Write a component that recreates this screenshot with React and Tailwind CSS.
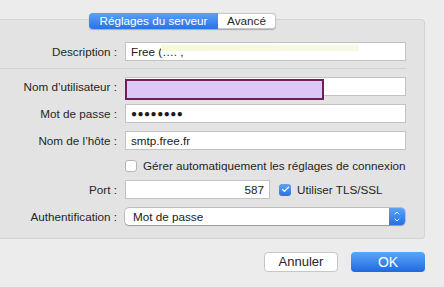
import { ChevronDown, ChevronUp, Check } from "lucide-react";

const Label = ({ children }) => (
  <div className="w-[125px] shrink-0 pr-[8px] text-right text-[11.7px] text-[#262626]">
    {children}
  </div>
);

const Field = ({ children, className = "" }) => (
  <div
    className={`h-[19px] border border-[#c3c3c3] bg-white flex items-center px-[5px] text-[11.7px] text-[#1a1a1a] ${className}`}
  >
    {children}
  </div>
);

export default function App() {
  return (
    <div
      className="w-[444px] h-[287px] bg-[#ececec] overflow-hidden"
      style={{ fontFamily: '"Liberation Sans", Arial, sans-serif' }}
    >
      <div className="pt-[19px] pr-[19px]">
        <div className="relative h-[220px] bg-[#e3e3e3] border-t border-r border-b border-[#d3d3d3] rounded-r-[4px]">
          {/* tabs */}
          <div className="absolute left-[89px] top-[-7px] flex h-[16px] text-[11.7px] shadow-[0_0.5px_1px_rgba(0,0,0,0.25)] rounded-[4px]">
            <div className="w-[129px] flex items-center justify-center rounded-l-[4px] bg-gradient-to-b from-[#57a2f7] to-[#2a72e6] text-white">
              Réglages du serveur
            </div>
            <div className="w-[58px] flex items-center justify-center rounded-r-[4px] bg-white border border-l-0 border-[#c8c8c8] text-[#262626]">
              Avancé
            </div>
          </div>

          <div className="pt-[22px] flex flex-col">
            <div className="flex items-center">
              <Label>Description :</Label>
              <Field className="w-[281px] relative">
                <span>Free (…. ,</span>
                <div className="absolute left-[35px] top-[2px] w-[198px] h-[6px] bg-gradient-to-r from-[#f7f9d6] to-[#f8f9e6]" />
              </Field>
            </div>

            <div className="mt-[7px] h-px bg-[#d1d1d1] mr-[18px]" />

            <div className="mt-[8px] flex items-center">
              <Label>Nom d’utilisateur :</Label>
              <Field className="w-[281px] relative">
                <div className="absolute left-[-1px] top-[1px] w-[199px] h-[21px] border-2 border-[#6e2157] bg-[#dbc8f6]" />
              </Field>
            </div>

            <div className="mt-[8px] flex items-center">
              <Label>Mot de passe :</Label>
              <Field className="w-[281px]">
                <span className="text-[10px] tracking-[0.5px]">●●●●●●●●</span>
              </Field>
            </div>

            <div className="mt-[8px] flex items-center">
              <Label>Nom de l’hôte :</Label>
              <Field className="w-[281px]">smtp.free.fr</Field>
            </div>

            <div className="mt-[9px] flex items-center h-[13px]">
              <div className="w-[125px] shrink-0" />
              <div className="w-[12px] h-[12px] rounded-[3px] border border-[#b5b5b5] bg-white" />
              <span className="ml-[6px] text-[11.7px] text-[#262626]">
                Gérer automatiquement les réglages de connexion
              </span>
            </div>

            <div className="mt-[8px] flex items-center">
              <Label>Port :</Label>
              <Field className="w-[145px] justify-end">587</Field>
              <div className="ml-[9px] w-[12px] h-[12px] rounded-[3px] bg-gradient-to-b from-[#5aa3f7] to-[#2c72e2] flex items-center justify-center">
                <Check size={9} strokeWidth={3.5} color="white" />
              </div>
              <span className="ml-[6px] text-[11.7px] text-[#262626]">Utiliser TLS/SSL</span>
            </div>

            <div className="mt-[9px] flex items-center">
              <Label>Authentification :</Label>
              <div className="w-[280px] h-[17px] flex rounded-[4px] bg-white shadow-[0_0_0_0.5px_rgba(0,0,0,0.3),0_0.5px_1px_rgba(0,0,0,0.2)]">
                <div className="flex-1 flex items-center pl-[8px] text-[11.7px] text-[#1a1a1a]">
                  Mot de passe
                </div>
                <div className="w-[16px] rounded-r-[4px] bg-gradient-to-b from-[#5aa3f7] to-[#2a70e2] flex flex-col items-center justify-center">
                  <ChevronUp size={8} strokeWidth={3} color="white" className="-mb-[1px]" />
                  <ChevronDown size={8} strokeWidth={3} color="white" />
                </div>
              </div>
            </div>
          </div>
        </div>
      </div>

      <div className="mt-[13px] flex justify-end gap-[13px] pr-[19px]">
        <div className="w-[74px] h-[20px] rounded-[4px] bg-white border border-[#c6c6c6] flex items-center justify-center text-[13px] text-[#262626]">
          Annuler
        </div>
        <div className="w-[74px] h-[20px] rounded-[4px] bg-gradient-to-b from-[#5aa6f8] to-[#1f69e0] flex items-center justify-center text-[14px] text-white">
          OK
        </div>
      </div>
    </div>
  );
}
